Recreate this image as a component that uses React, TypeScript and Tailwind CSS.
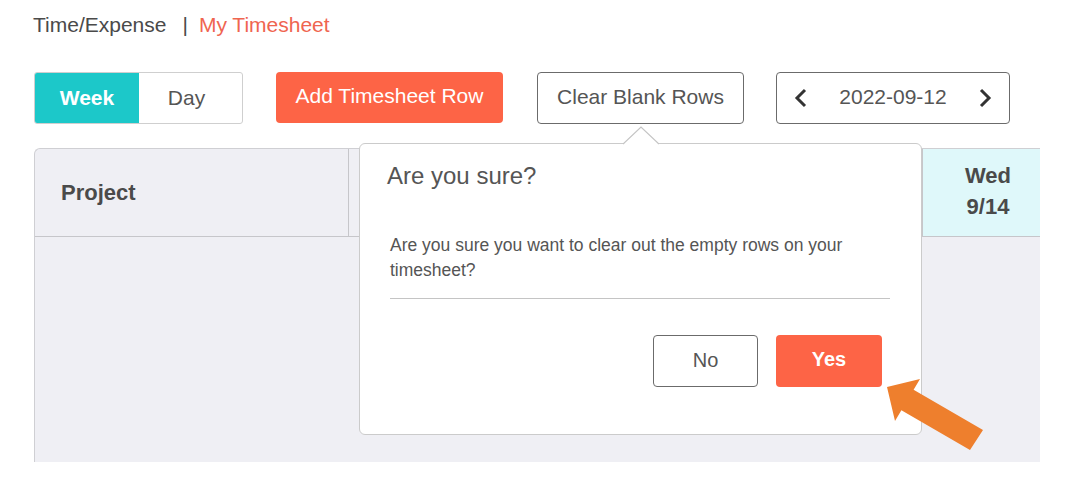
import React from 'react';

function Chevron({ dir }: { dir: 'left' | 'right' }) {
  return (
    <svg width="14" height="20" viewBox="0 0 14 20" className="text-[#333]">
      <polyline
        points={dir === 'left' ? '11,2 3,10 11,18' : '3,2 11,10 3,18'}
        fill="none"
        stroke="currentColor"
        strokeWidth="3"
        strokeLinejoin="miter"
      />
    </svg>
  );
}

export default function App() {
  const days = [
    { label: 'Mon', date: '9/12', w: 'w-[118px]' },
    { label: 'Tue', date: '9/13', w: 'w-[118px]' },
    { label: 'Wed', date: '9/14', w: 'w-[130px]', today: true },
  ];

  return (
    <div className="relative w-[1065px] h-[495px] overflow-hidden bg-white font-['Liberation_Sans',Arial,sans-serif] text-[#555]">
      {/* breadcrumb */}
      <div className="pl-[33px] pt-[12px] h-[38px] text-[21px] leading-[26px] flex">
        <span className="text-[#4a4a4a]">Time/Expense</span>
        <span className="ml-[16px] text-[#4a4a4a]">|</span>
        <span className="ml-[11px] text-[#ef6550]">My Timesheet</span>
      </div>

      {/* toolbar */}
      <div className="mt-[34px] pl-[34px] flex items-start">
        <div className="flex w-[209px] h-[52px] rounded-[3px] border border-[#cfcfcf] overflow-hidden text-[21px]">
          <div className="w-[104px] bg-[#1cc8c9] text-white font-bold flex items-center justify-center">
            Week
          </div>
          <div className="flex-1 flex items-center justify-center pr-[8px] text-[#555]">Day</div>
        </div>
        <button className="ml-[33px] w-[227px] h-[51px] rounded-[4px] bg-[#fd6446] text-white text-[21px] flex items-center justify-center pb-[3px]">
          Add Timesheet Row
        </button>
        <button className="ml-[34px] w-[207px] h-[52px] rounded-[4px] border border-[#6b6b6b] bg-white text-[#555] text-[21px] flex items-center justify-center pb-[3px]">
          Clear Blank Rows
        </button>
        <div className="ml-[32px] w-[234px] h-[52px] rounded-[4px] border border-[#6b6b6b] flex items-center justify-between px-[17px] text-[21px] text-[#555]">
          <Chevron dir="left" />
          <span className="pb-[2px]">2022-09-12</span>
          <Chevron dir="right" />
        </div>
      </div>

      {/* table */}
      <div className="mt-[24px] ml-[34px] w-[1006px] h-[314px] border-l border-t border-[#cfcfd3] rounded-tl-[6px] overflow-hidden bg-[#efeff4]">
        <div className="flex w-[1018px] h-[88px] border-b border-[#c6c6ca] text-[22px] font-bold text-[#4a4a4a]">
          <div className="w-[314px] shrink-0 border-r border-[#c6c6ca] flex items-center pl-[26px]">Project</div>
          <div className="flex-1 border-r border-[#c6c6ca]" />
          {days.map((d) => (
            <div
              key={d.label}
              className={`${d.w} shrink-0 flex flex-col items-center justify-center leading-[31px] pb-[4px] ${
                d.today ? 'bg-[#dff8fa]' : 'border-r border-[#c6c6ca]'
              }`}
            >
              <span>{d.label}</span>
              <span>{d.date}</span>
            </div>
          ))}
        </div>
      </div>

      {/* confirm popover */}
      <div className="absolute left-[359px] top-[143px] w-[563px] h-[292px] bg-white border border-[#cbcbcb] rounded-[6px] flex flex-col">
        <svg className="absolute left-[263px] top-[-18px]" width="36" height="19" viewBox="0 0 36 19">
          <polygon points="0,18.5 18,1 36,18.5" fill="white" />
          <polyline points="0,18 18,1 36,18" fill="none" stroke="#c4c4c4" strokeWidth="1.2" />
        </svg>
        <div className="ml-[27px] mt-[17px] text-[24px] leading-[30px] text-[#555]">Are you sure?</div>
        <p className="ml-[30px] mr-[60px] mt-[42px] text-[17.5px] leading-[25px] text-[#555]">
          Are you sure you want to clear out the empty rows on your timesheet?
        </p>
        <div className="ml-[30px] mr-[31px] mt-[15px] border-t border-[#c4c4c4]" />
        <div className="mt-[36px] mr-[39px] flex justify-end gap-[18px]">
          <button className="w-[105px] h-[52px] rounded-[4px] border border-[#6b6b6b] bg-white text-[20px] text-[#555] flex items-center justify-center pb-[2px]">
            No
          </button>
          <button className="w-[106px] h-[52px] rounded-[4px] bg-[#fd6446] text-white font-bold text-[20px] flex items-center justify-center pb-[5px]">
            Yes
          </button>
        </div>
      </div>

      {/* annotation arrow */}
      <svg className="absolute left-[880px] top-[370px] pointer-events-none" width="110" height="90" viewBox="0 0 110 90">
        <polygon
          points="7,17 40,9 33.6,19.7 103,60 90,80 21.4,40.3 15,51"
          fill="#ee7f2d"
        />
      </svg>
    </div>
  );
}
